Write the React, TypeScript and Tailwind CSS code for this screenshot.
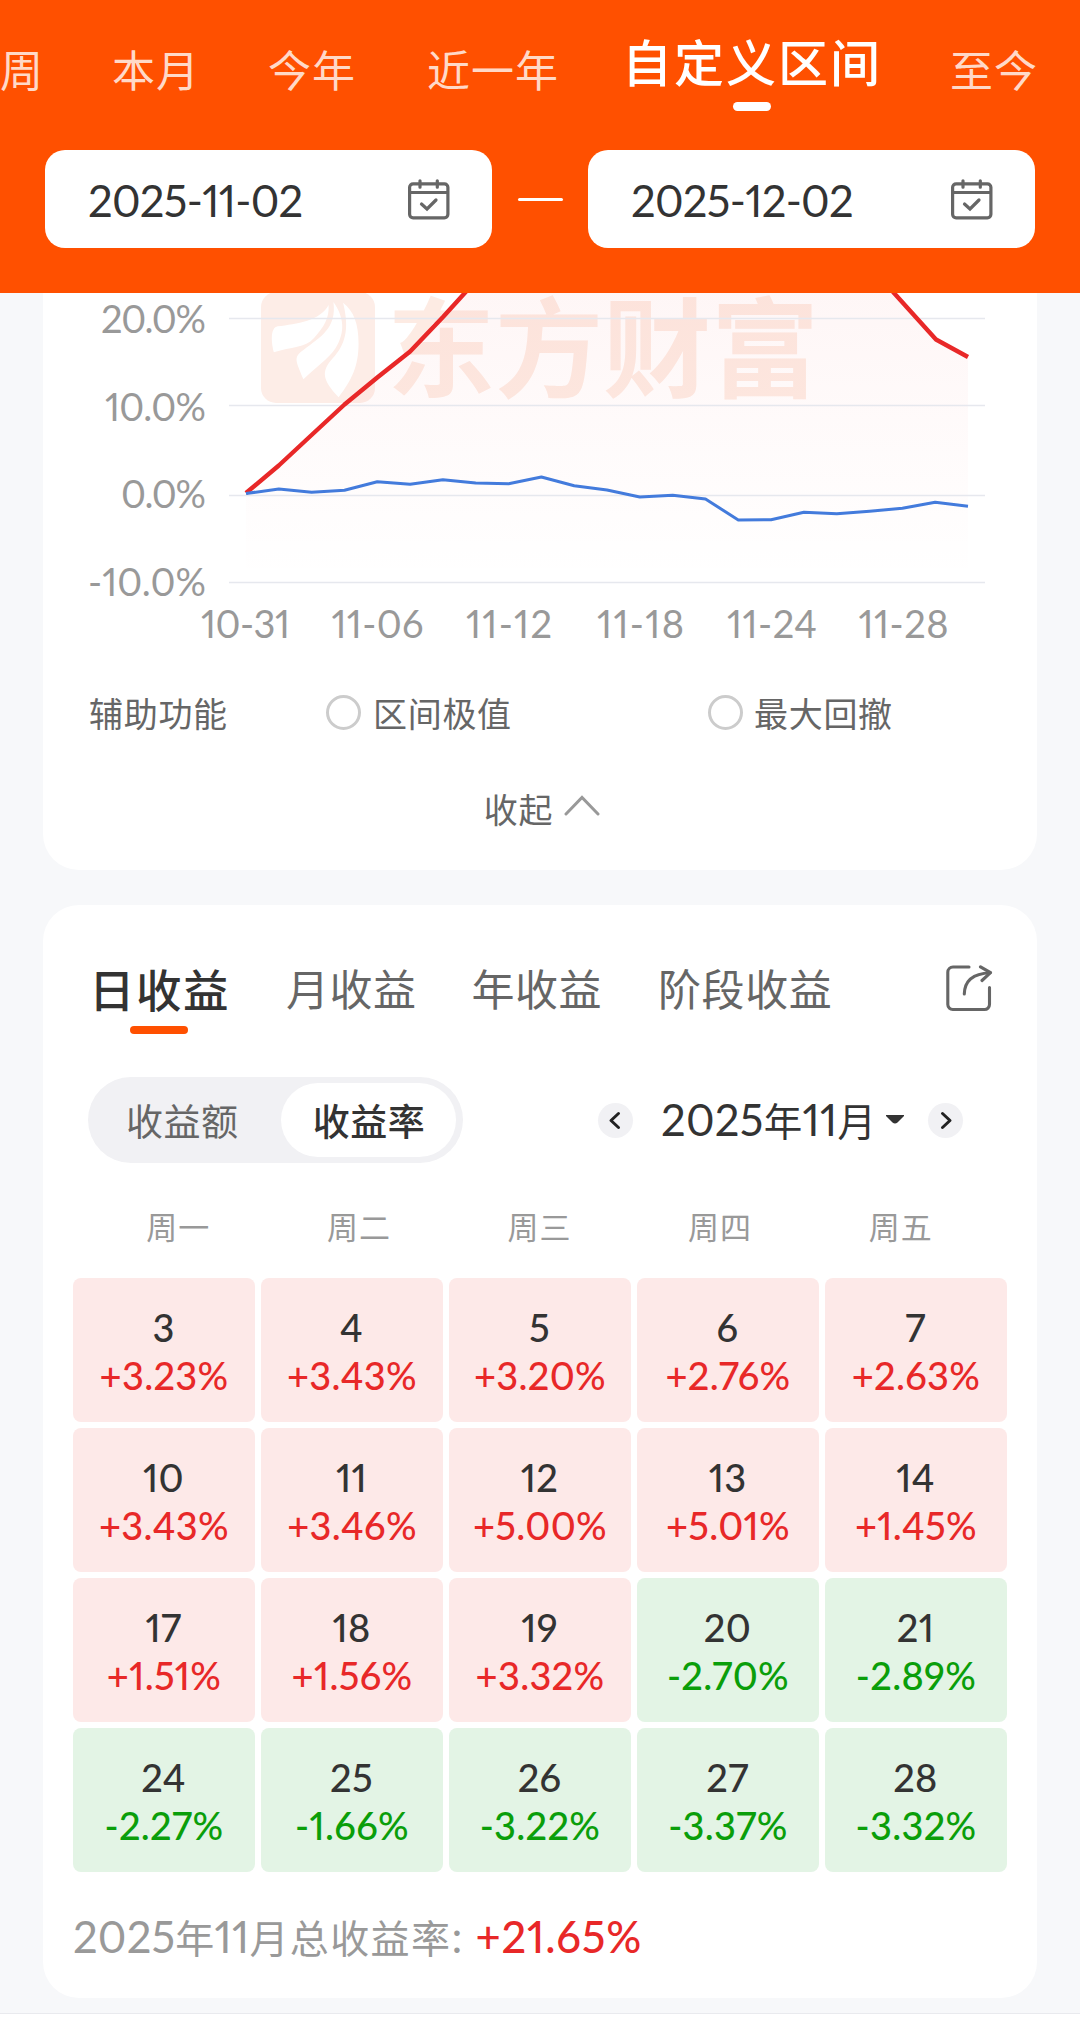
type RangeTab = { label: string; className: string };

type DayCell = { day: number; rate: string };

const RANGE_TABS: RangeTab[] = [
  { label: "周", className: "" },
  { label: "本月", className: "ml-[68px]" },
  { label: "今年", className: "ml-[68px]" },
  { label: "近一年", className: "ml-[71px]" },
];

const WEEKDAYS = ["周一", "周二", "周三", "周四", "周五"];

const DAYS: DayCell[] = [
  { day: 3, rate: "+3.23%" },
  { day: 4, rate: "+3.43%" },
  { day: 5, rate: "+3.20%" },
  { day: 6, rate: "+2.76%" },
  { day: 7, rate: "+2.63%" },
  { day: 10, rate: "+3.43%" },
  { day: 11, rate: "+3.46%" },
  { day: 12, rate: "+5.00%" },
  { day: 13, rate: "+5.01%" },
  { day: 14, rate: "+1.45%" },
  { day: 17, rate: "+1.51%" },
  { day: 18, rate: "+1.56%" },
  { day: 19, rate: "+3.32%" },
  { day: 20, rate: "-2.70%" },
  { day: 21, rate: "-2.89%" },
  { day: 24, rate: "-2.27%" },
  { day: 25, rate: "-1.66%" },
  { day: 26, rate: "-3.22%" },
  { day: 27, rate: "-3.37%" },
  { day: 28, rate: "-3.32%" },
];

// Chart geometry, in pixels relative to the card's top left corner.
const Y_TICKS = [
  { label: "20.0%", line: 25.5, baseline: 39.5, width: 105 },
  { label: "10.0%", line: 112.5, baseline: 127.5, width: 101 },
  { label: "0.0%", line: 202.5, baseline: 214.5, width: 85 },
  { label: "-10.0%", line: 289.5, baseline: 302.5, width: 118 },
];

const X_TICKS = [
  { label: "10-31", x: 202.5, width: 89 },
  { label: "11-06", x: 334.5, width: 92 },
  { label: "11-12", x: 466, width: 86 },
  { label: "11-18", x: 597.5, width: 87 },
  { label: "11-24", x: 729, width: 90 },
  { label: "11-28", x: 860.5, width: 90 },
];

const STEP = 32.82;
const INDEX_SERIES = [
  200.5, 196, 199.3, 197.3, 188.7, 191.3, 186.7, 190, 190.7, 184, 192.7, 197,
  204, 202.3, 206, 227, 226.7, 219.3, 220.7, 218.3, 215.3, 209.3, 213.3,
];
const INDEX_POINTS = INDEX_SERIES.map(
  (y, i) => `${(203 + i * STEP).toFixed(1)},${y}`
).join(" ");

const RETURN_LINE =
  "203,200 235.8,172.5 268.6,142 301.5,111.5 334.3,84.5 367.1,58.5 400,24 449,-30 800,-60 851,0 893,46.5 925,64";

function CalendarIcon() {
  return (
    <svg
      width="42"
      height="41"
      viewBox="0 0 42 41"
      fill="none"
      stroke="#666"
      strokeWidth="3.2"
      strokeLinecap="round"
      aria-hidden
    >
      <rect x="1.6" y="4.8" width="38.3" height="34" rx="3.5" />
      <path d="M2 13.5h38" strokeLinecap="butt" />
      <path d="M12 1.8v6.4M29.3 1.8v6.4M13.5 25l5.5 5 9-9" />
    </svg>
  );
}

function ShareIcon() {
  return (
    <svg
      width="47"
      height="47"
      viewBox="0 0 47 47"
      fill="none"
      stroke="#666"
      strokeWidth="3.1"
      strokeLinecap="round"
      strokeLinejoin="round"
      aria-hidden
    >
      <path d="M23 2H7a5.2 5.2 0 0 0-5.2 5.2v32.3A5 5 0 0 0 7 44.500h31.500a5 5 0 0 0 5-5V22.500" />
      <path d="M18.300 29C18.600 15.500 27 8.500 44 7.700" />
      <path d="M34.500 1.800L44.500 7.700L36 15.500" />
    </svg>
  );
}

function ArrowButton({ direction }: { direction: "prev" | "next" }) {
  return (
    <button
      type="button"
      aria-label={direction === "prev" ? "上个月" : "下个月"}
      className="flex size-[35px] shrink-0 items-center justify-center rounded-full bg-[#f1f1f4]"
    >
      <svg
        width="35"
        height="35"
        viewBox="0 0 35 35"
        fill="none"
        stroke="#222"
        strokeWidth="3"
        strokeLinecap="round"
        strokeLinejoin="round"
        aria-hidden
      >
        <path
          d={direction === "prev" ? "M20.5 10.5l-7.5 7 7.5 7" : "M14.5 10.5l7.5 7-7.5 7"}
        />
      </svg>
    </button>
  );
}

function DateField({ value }: { value: string }) {
  return (
    <div className="flex h-[98px] w-[447px] items-center justify-between rounded-[20px] bg-white pr-[42px] pl-[43px]">
      <span className="pt-[2px] text-[43.5px] leading-[60px] tracking-[-0.7px] text-[#333]">
        {value}
      </span>
      <CalendarIcon />
    </div>
  );
}

function Header() {
  return (
    <header className="h-[293px] overflow-hidden bg-[#ff5000]">
      <nav className="flex h-[150px] whitespace-nowrap">
        {RANGE_TABS.map((tab) => (
          <span
            key={tab.label}
            className={`mt-[41px] shrink-0 text-[43px] leading-[60px] tracking-[1px] text-[#ffd9c8] ${tab.className}`}
          >
            {tab.label}
          </span>
        ))}
        <div className="mt-[33px] ml-[63px] flex shrink-0 flex-col items-center">
          <span className="text-[50px] leading-[60px] font-medium tracking-[2px] text-white">
            自定义区间
          </span>
          <span className="mt-[9px] h-[9px] w-[38px] rounded-full bg-white" />
        </div>
        <span className="mt-[41px] ml-[68px] shrink-0 text-[43px] leading-[60px] tracking-[1px] text-[#ffd9c8]">
          至今
        </span>
      </nav>
      <div className="flex items-center justify-between px-[45px]">
        <DateField value="2025-11-02" />
        <span className="h-[3px] w-[45px] rounded-full bg-white" />
        <DateField value="2025-12-02" />
      </div>
    </header>
  );
}

function Watermark() {
  return (
    <g>
      <rect x="218" y="-1" width="114" height="111" rx="15" fill="#fdede7" />
      <g transform="translate(-3 -13) scale(.3444 .3333)" fill="#fff">
        <path d="M838 75C815 122 745 132 690 139C670 143 670 180 679 217C730 200 770 204 795 175C825 140 840 115 838 75Z" />
        <path d="M852 66C862 145 815 170 765 210C735 232 742 240 765 298C800 262 835 240 858 205C888 155 882 110 852 66Z" />
        <path d="M880 68C900 150 885 195 850 235C815 275 820 300 867 352C905 300 925 260 925 190C925 130 910 92 880 68Z" />
      </g>
      <text
        x="344"
        y="96"
        fontSize="108"
        fontWeight="700"
        textLength="432"
        fill="#fdebe3"
      >
        东方财富
      </text>
    </g>
  );
}

function ReturnChart() {
  return (
    <svg width="994" height="370" viewBox="0 0 994 370" className="block" aria-hidden>
      <defs>
        <linearGradient id="returnFill" x1="0" y1="-60" x2="0" y2="289" gradientUnits="userSpaceOnUse">
          <stop offset="0" stopColor="#f02828" stopOpacity=".05" />
          <stop offset="1" stopColor="#f02828" stopOpacity="0" />
        </linearGradient>
      </defs>
      <Watermark />
      <polygon points={`${RETURN_LINE} 925,289 203,289`} fill="url(#returnFill)" />
      {Y_TICKS.map((tick) => (
        <g key={tick.label}>
          <path d={`M186 ${tick.line}H942`} stroke="#e6e8ee" strokeWidth="1.3" />
          <text
            x={163 - tick.width}
            y={tick.baseline}
            fontSize="38"
            textLength={tick.width}
            fill="#999"
          >
            {tick.label}
          </text>
        </g>
      ))}
      <polyline points={RETURN_LINE} fill="none" stroke="#e82828" strokeWidth="4.4" strokeLinejoin="round" />
      <polyline points={INDEX_POINTS} fill="none" stroke="#437bdc" strokeWidth="3" strokeLinejoin="round" />
      {X_TICKS.map((tick) => (
        <text
          key={tick.label}
          x={tick.x - tick.width / 2}
          y="344.5"
          fontSize="38"
          textLength={tick.width}
          fill="#999"
        >
          {tick.label}
        </text>
      ))}
    </svg>
  );
}

function ChartCard() {
  return (
    <section className="h-[577px] overflow-hidden rounded-b-[36px] bg-white">
      <ReturnChart />
      <div className="flex h-[99px] items-center pl-[46px] text-[34px] tracking-[0.7px] text-[#666]">
        <span className="w-[237px] pt-[2px]">辅助功能</span>
        <span className="size-[35px] rounded-full border-[3px] border-[#ccc]" />
        <span className="ml-[12px] w-[335px] pt-[2px]">区间极值</span>
        <span className="size-[35px] rounded-full border-[3px] border-[#ccc]" />
        <span className="ml-[11px] pt-[2px]">最大回撤</span>
      </div>
      <button
        type="button"
        className="flex h-[93px] w-full items-center justify-center pl-[4px] text-[34px] tracking-[0.7px] text-[#666]"
      >
        <span className="pt-[2px]">收起</span>
        <svg width="36" height="22" viewBox="0 0 36 22" fill="none" className="mb-[7px] ml-[11px]" aria-hidden>
          <path d="M2 20L18 3.5L34 20" stroke="#999" strokeWidth="3" strokeLinecap="round" />
        </svg>
      </button>
    </section>
  );
}

function CalendarCard() {
  return (
    <section className="mt-[35px] h-[1093px] rounded-[36px] bg-white">
      <div className="flex h-[172px] items-start pt-[55px] whitespace-nowrap text-[#666]">
        <div className="ml-[46px] flex flex-col items-center">
          <span className="pt-px text-[45.5px] leading-[60px] font-medium tracking-[1.5px] text-[#333]">
            日收益
          </span>
          <span className="mt-[5px] mr-[2px] h-[8px] w-[58px] rounded-full bg-[#ff5000]" />
        </div>
        <span className="ml-[56px] text-[43px] leading-[60px] tracking-[0.5px]">月收益</span>
        <span className="ml-[55px] text-[43px] leading-[60px] tracking-[0.5px]">年收益</span>
        <span className="ml-[56px] text-[43px] leading-[60px] tracking-[0.6px]">阶段收益</span>
        <span className="mt-[5px] mr-[44px] ml-auto">
          <ShareIcon />
        </span>
      </div>

      <div className="flex h-[86px] items-center pl-[45px]">
        <div className="flex h-[86px] w-[375px] items-center justify-between rounded-full bg-[#f1f1f4] pr-[7px] pl-[38px] text-[37px] tracking-[0.5px] text-[#666]">
          <span className="pt-[3px]">收益额</span>
          <span className="flex h-[74px] w-[175px] items-center justify-center rounded-full bg-white pt-[3px] pl-px font-medium text-[#333]">
            收益率
          </span>
        </div>
        <div className="ml-[135px] flex items-center">
          <ArrowButton direction="prev" />
          <button type="button" className="ml-[28px] flex w-[267px] items-center whitespace-nowrap text-[#333]">
            <span className="text-[43.5px] leading-[60px] tracking-[0.3px]">
              2025<span className="text-[38.5px]">年</span>11<span className="text-[38.5px]">月</span>
            </span>
            <svg width="18" height="9" viewBox="0 0 18 9" className="mt-[-2px] ml-[10px]" aria-hidden>
              <path d="M0 0h18v1l-6.5 6.5q-2.5 2-5 0L0 1z" fill="#333" />
            </svg>
          </button>
          <ArrowButton direction="next" />
        </div>
      </div>

      <div className="mt-[34px] ml-[45px] grid h-[60px] w-[903px] grid-cols-5 items-center text-center text-[31px] tracking-[1px] text-[#999]">
        {WEEKDAYS.map((name) => (
          <span key={name}>{name}</span>
        ))}
      </div>

      <div className="mt-[21px] ml-[30px] grid w-[934px] grid-cols-5 gap-[6px]">
        {DAYS.map(({ day, rate }) => {
          const isUp = rate.startsWith("+");
          return (
            <div
              key={day}
              className={`flex h-[144px] flex-col items-center justify-center rounded-[8px] pt-px text-[38px] leading-[48px] font-medium tracking-[0.3px] ${
                isUp ? "bg-[#fde9e8]" : "bg-[#e3f4e5]"
              }`}
            >
              <span className="pr-px text-[#333]">{day}</span>
              <span className={isUp ? "text-[#e82828]" : "text-[#0a9e0a]"}>{rate}</span>
            </div>
          );
        })}
      </div>

      <p className="mt-[34px] ml-[30px] text-[43.5px] leading-[60px] tracking-[0.2px] whitespace-nowrap text-[#999]">
        2025<span className="text-[39px]">年</span>11
        <span className="text-[39px] tracking-[1.4px]">月总收益率</span>:
        <span className="ml-[13px] font-medium tracking-[0.8px] text-[#e82828]">+21.65%</span>
      </p>
    </section>
  );
}

export default function App() {
  return (
    <div className="h-[2019px] w-[1080px] overflow-hidden bg-[#f7f8fa] font-[family-name:Lato,'Noto_Sans_CJK_SC',sans-serif] proportional-nums">
      <Header />
      <main className="px-[43px]">
        <ChartCard />
        <CalendarCard />
      </main>
      <div className="mt-[15px] h-[6px] border-t border-[#e9eaee] bg-white" />
    </div>
  );
}
